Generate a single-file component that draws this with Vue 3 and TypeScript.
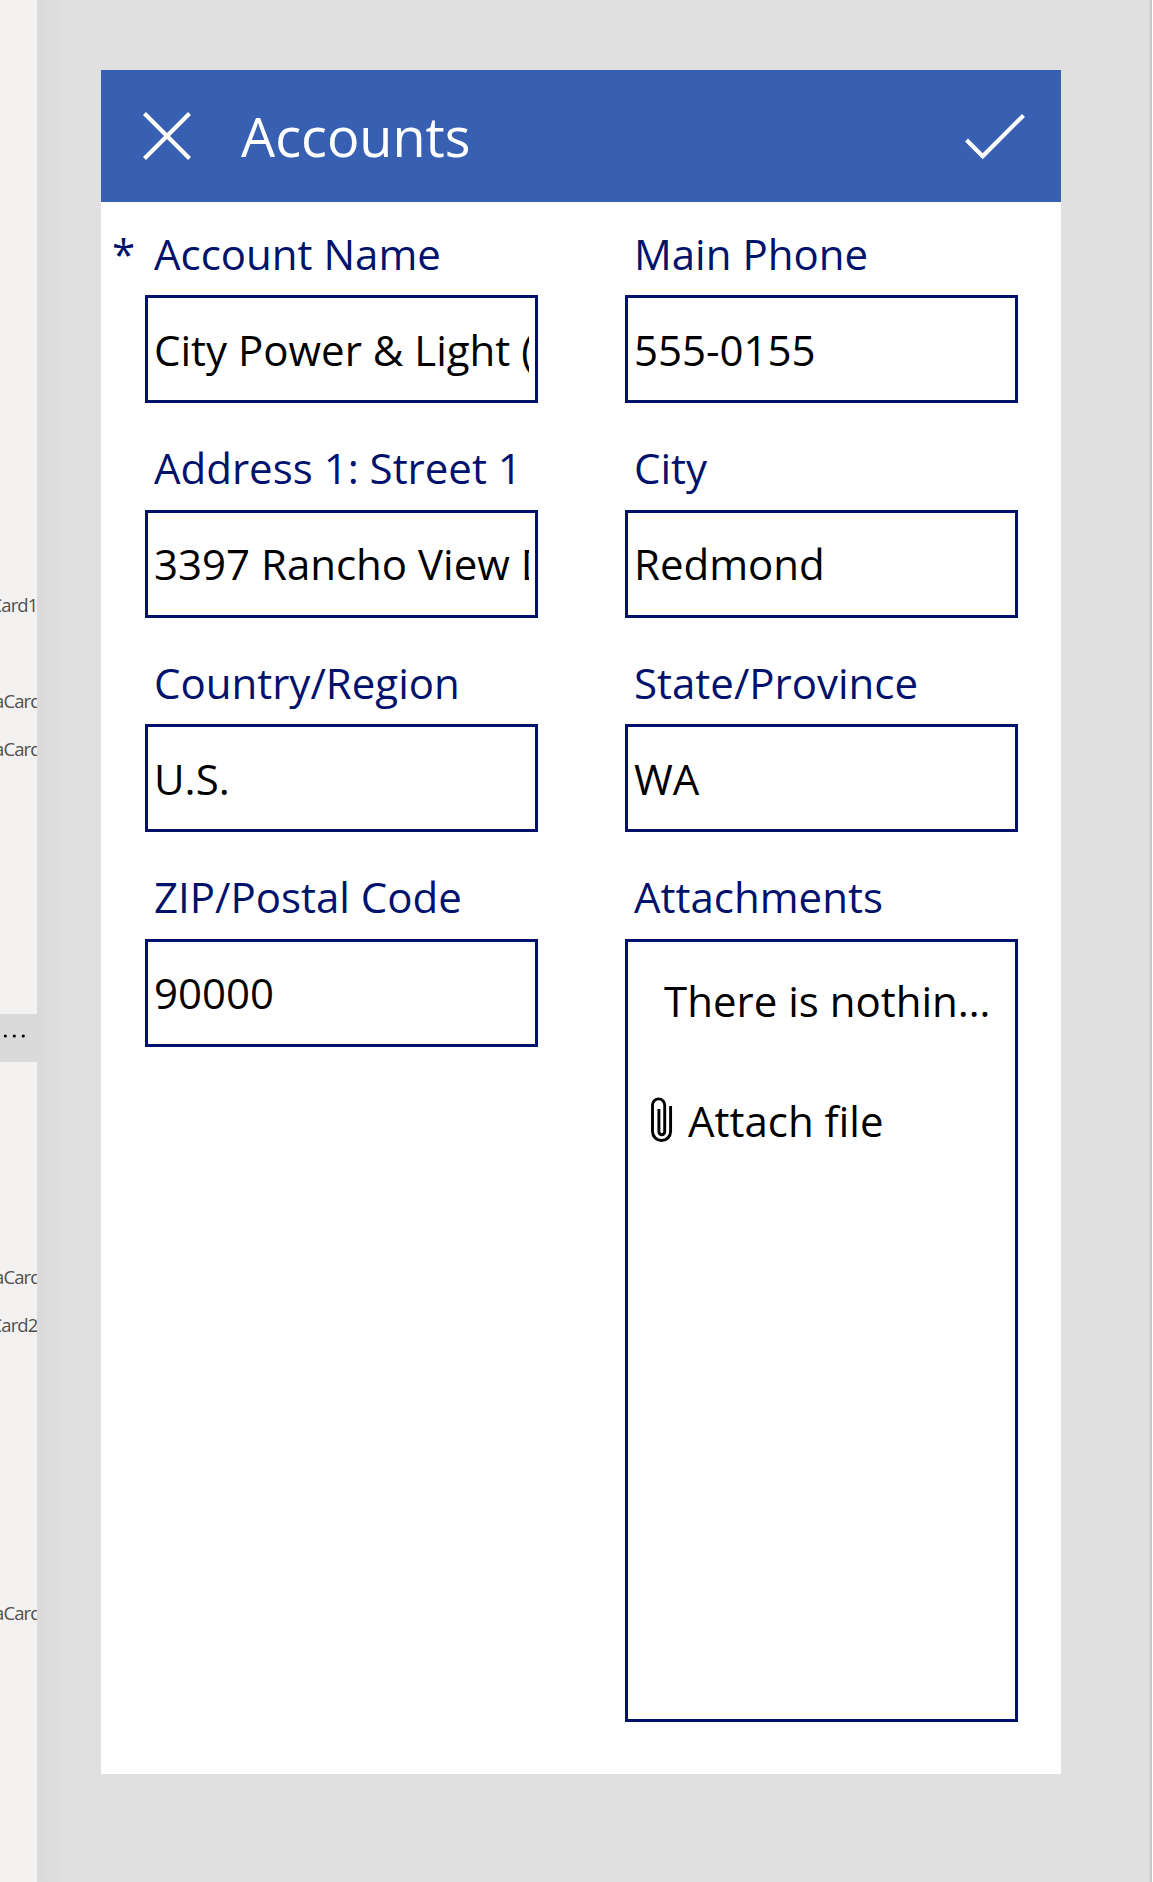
<script setup lang="ts">
interface Field {
  label: string
  value: string
  required?: boolean
}

const fields: Field[] = [
  { label: 'Account Name', value: 'City Power & Light (', required: true },
  { label: 'Main Phone', value: '555-0155' },
  { label: 'Address 1: Street 1', value: '3397 Rancho View D' },
  { label: 'City', value: 'Redmond' },
  { label: 'Country/Region', value: 'U.S.' },
  { label: 'State/Province', value: 'WA' },
  { label: 'ZIP/Postal Code', value: '90000' },
]

// Visible tails of the tree view entries, keyed by row index
const tails: Record<number, string> = {
  12: 'Card1',
  14: 'aCard',
  15: 'aCard',
  26: 'aCard',
  27: 'Card2',
  33: 'aCard',
}
const selectedRow = 21
</script>

<template>
  <div class="studio">
    <aside class="tree">
      <div v-for="i in 39" :key="i" class="row" :class="{ selected: i - 1 === selectedRow }">
        <span v-if="tails[i - 1]" class="tail" :class="{ whole: !tails[i - 1].startsWith('a') }">{{ tails[i - 1] }}</span>
        <svg v-if="i - 1 === selectedRow" width="26" height="6" viewBox="0 0 26 6">
          <circle cx="5.3" cy="3" r="1.6" />
          <circle cx="14.3" cy="3" r="1.6" />
          <circle cx="23.3" cy="3" r="1.6" />
        </svg>
      </div>
    </aside>
    <main class="canvas">
      <section class="screen">
        <header class="bar">
          <svg class="cancel" width="48" height="48" viewBox="0 0 48 48">
            <path d="M1.5 1.5 46.5 46.5M46.5 1.5 1.5 46.5" />
          </svg>
          <h1>Accounts</h1>
          <svg class="save" width="62" height="48" viewBox="0 0 62 48">
            <path d="M1.5 28 17.7 44.2 58.5 3.4" />
          </svg>
        </header>
        <div class="form">
          <div v-for="f in fields" :key="f.label" class="card">
            <label><span v-if="f.required" class="star">*</span>{{ f.label }}</label>
            <div class="box"><span class="value">{{ f.value }}</span></div>
          </div>
          <div class="card">
            <label>Attachments</label>
            <div class="box files">
              <p class="none">There is nothing attached.</p>
              <div class="attach">
                <svg width="22" height="46" viewBox="0 0 22 46">
                  <path d="M19.6 9V34.5a9.05 9.05 0 0 1-18.1 0V8a6.1 6.1 0 0 1 12.2 0V34.8a2.9 2.9 0 0 1-5.8 0V12" />
                </svg>
                <span>Attach file</span>
              </div>
            </div>
          </div>
        </div>
      </section>
    </main>
    <div class="edge"></div>
  </div>
</template>

<style>
body {
  margin: 0;
}
</style>

<style scoped>
.studio {
  display: flex;
  width: 1153px;
  height: 1882px;
  overflow: hidden;
  background: #fff;
  font-family: 'Open Sans', sans-serif;
}
.tree {
  width: 37px;
  padding-top: 6px;
  box-sizing: border-box;
  background: #f3f2f1;
  overflow: hidden;
  flex: none;
}
.row {
  height: 48px;
  box-sizing: border-box;
  padding-bottom: 3px;
  display: flex;
  align-items: center;
  overflow: hidden;
}
.row.selected {
  padding-bottom: 4px;
  background: #dadada;
}
.tail {
  font-size: 18.5px;
  letter-spacing: -0.9px;
  color: #505050;
  margin-left: -5.9px;
  white-space: nowrap;
}
.tail.whole {
  margin-left: -9.5px;
}
.canvas {
  width: 1112px;
  flex: none;
  box-sizing: border-box;
  padding: 70px 0 0 64px;
  background: linear-gradient(90deg, #dadada, #e0e0e0 28px);
}
.edge {
  width: 3px;
  background: linear-gradient(90deg, #d8d8d8 1px, #c8c8c8 1px);
}
.screen {
  width: 960px;
  height: 1704px;
  background: #fff;
}
.bar {
  display: flex;
  align-items: center;
  height: 132px;
  box-sizing: border-box;
  padding: 0 34px 0 42px;
  background: #3860b2;
  color: #fff;
}
.bar svg {
  fill: none;
  stroke: #fff;
  stroke-width: 4.2;
}
h1 {
  margin: 0 auto 0 50px;
  font-size: 54px;
  line-height: 74px;
  font-weight: 400;
}
.form {
  display: grid;
  grid-template-columns: 480px 480px;
  grid-auto-rows: 214.5px;
}
.card {
  padding: 22.7px 43px 0 44px;
}
label {
  position: relative;
  display: block;
  height: 70.4px;
  padding-left: 9px;
  font-size: 42px;
  line-height: 57px;
  color: #00126b;
  white-space: nowrap;
}
.star {
  position: absolute;
  left: -33px;
}
.box {
  height: 108px;
  box-sizing: border-box;
  border: 3px solid #00126b;
  padding: 0.6px 6px 0;
  font-size: 42px;
  line-height: 102px;
  color: #000;
}
.value {
  display: block;
  height: 101px;
  overflow: hidden;
  white-space: nowrap;
}
.files {
  height: 783.3px;
  padding: 29.2px 22px 0 23px;
  line-height: 60px;
}
.none {
  margin: 0 0 0 13px;
  overflow: hidden;
  text-overflow: ellipsis;
  white-space: nowrap;
}
.attach {
  display: flex;
  align-items: center;
  gap: 15px;
  margin-top: 60px;
}
.attach svg {
  fill: none;
  stroke: #000;
  stroke-width: 2.9;
  margin-bottom: 2px;
}
</style>
